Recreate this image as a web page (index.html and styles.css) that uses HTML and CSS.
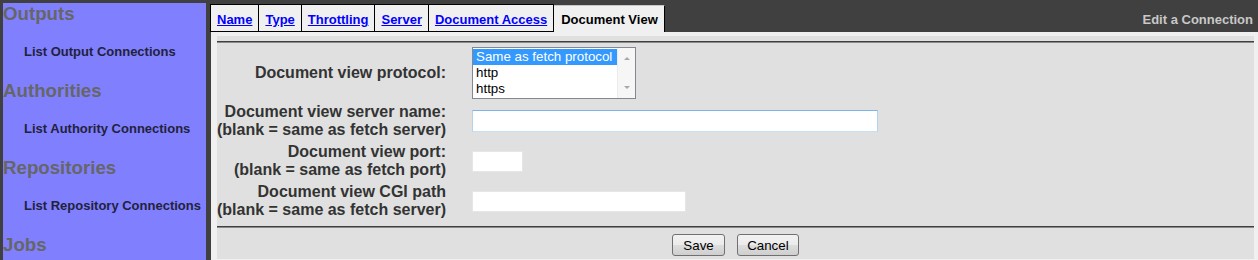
FILE: index.html
```html
<!DOCTYPE html>
<html lang="en">
<head>
    <meta charset="UTF-8">
    <meta name="viewport" content="width=device-width, initial-scale=1.0">
    <title>Edit a Connection</title>
    <link rel="stylesheet" href="styles.css">
</head>
<body>
    <div class="page">
        <nav class="sidebar">
            <div class="nav-section">
                <div class="nav-title">Outputs</div>
                <a class="nav-link" href="#">List Output Connections</a>
            </div>
            <div class="nav-section">
                <div class="nav-title">Authorities</div>
                <a class="nav-link" href="#">List Authority Connections</a>
            </div>
            <div class="nav-section">
                <div class="nav-title">Repositories</div>
                <a class="nav-link" href="#">List Repository Connections</a>
            </div>
            <div class="nav-section">
                <div class="nav-title">Jobs</div>
            </div>
        </nav>

        <main class="main">
            <div class="tabbar">
                <a class="tab first" href="#">Name</a>
                <a class="tab" href="#">Type</a>
                <a class="tab" href="#">Throttling</a>
                <a class="tab" href="#">Server</a>
                <a class="tab" href="#">Document Access</a>
                <span class="tab active">Document View</span>
                <span class="title">Edit a Connection</span>
            </div>

            <div class="content">
                <form class="panel" onsubmit="return false">
                    <hr class="rule">
                    <table class="fields">
                        <tr>
                            <td class="label">Document view protocol:</td>
                            <td class="value">
                                <div class="listbox">
                                    <ul class="options">
                                        <li class="selected">Same as fetch protocol</li>
                                        <li>http</li>
                                        <li>https</li>
                                    </ul>
                                    <div class="scrollbar">
                                        <span class="arrow up"></span>
                                        <span class="arrow down"></span>
                                    </div>
                                </div>
                            </td>
                        </tr>
                        <tr>
                            <td class="label">Document view server name:<br>(blank = same as fetch server)</td>
                            <td class="value"><input type="text" class="field server-name"></td>
                        </tr>
                        <tr>
                            <td class="label">Document view port:<br>(blank = same as fetch port)</td>
                            <td class="value"><input type="text" class="field port"></td>
                        </tr>
                        <tr>
                            <td class="label">Document view CGI path<br>(blank = same as fetch server)</td>
                            <td class="value"><input type="text" class="field cgi-path"></td>
                        </tr>
                    </table>
                    <hr class="rule bottom">
                    <div class="buttons">
                        <button type="submit" class="btn save">Save</button>
                        <button type="button" class="btn cancel">Cancel</button>
                    </div>
                </form>
            </div>
        </main>
    </div>
</body>
</html>
```
FILE: styles.css
```css
html, body {
    margin: 0;
    padding: 0;
    height: 100%;
}
body {
    font-family: "Liberation Sans", Arial, sans-serif;
    background-color: #404040;
    overflow: hidden;
}
.page {
    display: flex;
    height: 100vh;
}

/* left navigation */
.sidebar {
    width: 203px;
    margin: 3px 0 0 3px;
    background-color: #8080ff;
}
.nav-title {
    font-size: 18.7px;
    font-weight: bold;
    line-height: 22px;
    color: #666;
    margin-bottom: 19px;
}
.nav-link {
    display: block;
    padding-left: 21px;
    font-size: 13px;
    font-weight: bold;
    line-height: 16px;
    color: #22223a;
    text-decoration: none;
    margin-bottom: 20px;
}

/* main area */
.main {
    flex: 1;
    display: flex;
    flex-direction: column;
    margin-left: 4px;
}
.tabbar {
    height: 32px;
    display: flex;
    align-items: flex-end;
    flex-shrink: 0;
}
.tab {
    display: block;
    background-color: #f0f0f0;
    border: 1px solid #000;
    border-left: none;
    padding: 7px 6px 3px 6px;
    font-size: 13px;
    font-weight: bold;
    line-height: 16px;
    color: #0000ff;
    text-decoration: underline;
}
.tab.first {
    border-left: 1px solid #000;
}
.tab.active {
    color: #000;
    text-decoration: none;
    border-top: 1px solid #c8c8c8;
    border-bottom: none;
    padding: 6px 6px 4px 7px;
}
.title {
    margin-left: auto;
    padding: 0 5px 4px 0;
    font-size: 13px;
    font-weight: bold;
    line-height: 16px;
    color: #c8c8c8;
}

.content {
    flex: 1;
    display: flex;
    background-color: #f0f0f0;
    border-left: 1px solid #404040;
    padding: 4px 4px 1px 6px;
}
.panel {
    flex: 1;
    margin: 0;
    padding-top: 5px;
    background-color: #e0e0e0;
}
.rule {
    margin: 0;
    height: 0;
    border: none;
    border-top: 1px solid #404040;
    border-bottom: 1px solid #8a8a8a;
}
.rule.bottom {
    margin-top: 4px;
}

/* form table */
.fields {
    margin-top: 1px;
    border-collapse: separate;
    border-spacing: 0 2px;
}
.fields td {
    padding: 1px 0;
    vertical-align: middle;
}
.fields td.label {
    text-align: right;
    white-space: nowrap;
    font-size: 16px;
    font-weight: bold;
    line-height: 18px;
    color: #333;
    padding-right: 13px;
}
.fields td.value {
    padding-left: 13px;
}

.listbox {
    display: flex;
    width: 162px;
    height: 50px;
    border: 1px solid #828790;
    background-color: #fff;
}
.options {
    flex: 1;
    list-style: none;
    margin: 0;
    padding: 1px 0 0 0;
}
.options li {
    height: 16px;
    line-height: 16px;
    padding-left: 3px;
    font-size: 13.33px;
    color: #000;
}
.options li.selected {
    background-color: #3399ff;
    color: #fff;
}
.scrollbar {
    width: 17px;
    background-color: #f6f6f6;
    border-left: 1px solid #ececec;
    display: flex;
    flex-direction: column;
    justify-content: space-between;
    align-items: center;
    padding: 9px 0 9px 0;
}
.arrow {
    width: 0;
    height: 0;
    border-left: 3px solid transparent;
    border-right: 3px solid transparent;
}
.arrow.up {
    border-bottom: 3px solid #a8a8a8;
}
.arrow.down {
    border-top: 3px solid #a8a8a8;
}

.field {
    display: block;
    box-sizing: border-box;
    margin: 0;
    padding: 1px 3px;
    border: 1px solid #e6e6e6;
    background-color: #fff;
    font-family: "Liberation Sans", Arial, sans-serif;
    font-size: 13.33px;
    height: 21px;
}
.field.server-name {
    width: 406px;
    height: 22px;
    border-color: #7eb4ea #b5d3ee #c5e0f5 #b5d3ee;
}
.field.port {
    width: 51px;
}
.field.cgi-path {
    width: 214px;
}

.buttons {
    text-align: center;
    margin-top: 6px;
}
.btn {
    height: 22px;
    margin: 0 4px;
    border: 1px solid #707070;
    border-radius: 3px;
    background: linear-gradient(#f2f2f2, #ebebeb 50%, #dddddd 51%, #cfcfcf);
    font-family: "Liberation Sans", Arial, sans-serif;
    font-size: 13.33px;
    color: #000;
    cursor: pointer;
}
.btn.save {
    padding: 0 10px;
}
.btn.cancel {
    padding: 0 9px;
}
```
